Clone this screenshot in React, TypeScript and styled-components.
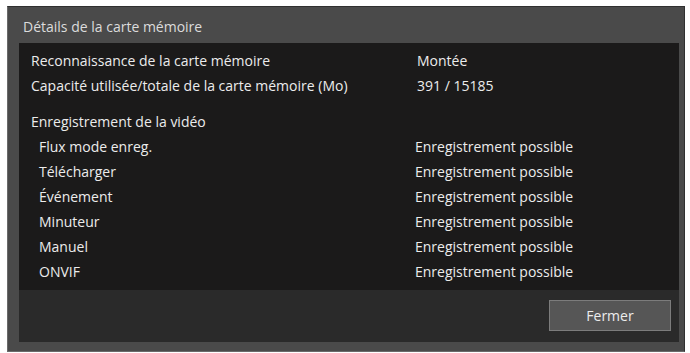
import React from "react";
import styled, { createGlobalStyle } from "styled-components";

const GlobalStyle = createGlobalStyle`
  html, body {
    margin: 0;
    padding: 0;
    background: #ffffff;
  }
  body {
    font-family: "Open Sans", "Noto Sans", sans-serif;
  }
`;

const Page = styled.div`
  width: 690px;
  height: 353px;
  padding: 6px 5px 1px 7px;
  box-sizing: border-box;
`;

const Dialog = styled.div`
  width: 678px;
  height: 346px;
  box-sizing: border-box;
  background: #4a4a4a;
  border: 1px solid #303030;
  border-left-color: #6a6a6a;
  border-bottom-color: #6a6a6a;
  display: flex;
  flex-direction: column;
  padding: 0 5px 9px 11px;
`;

const TitleBar = styled.div`
  height: 36px;
  display: flex;
  align-items: center;
  padding: 2px 0 0 4px;
  box-sizing: border-box;
  color: #dcdcdc;
  font-size: 14px;
`;

const Content = styled.div`
  height: 247px;
  background: #1b1a1a;
  padding: 5px 12px 0 12px;
  box-sizing: border-box;
  color: #ececec;
  font-size: 14px;
`;

const Row = styled.div<{ $indent?: boolean }>`
  display: grid;
  grid-template-columns: ${(p) => (p.$indent ? "376px" : "384px")} 1fr;
  padding-left: ${(p) => (p.$indent ? "8px" : "0")};
  height: 25px;
  align-items: center;
`;

const Section = styled.div`
  margin-top: 11px;
  height: 25px;
  display: flex;
  align-items: center;
`;

const Value = styled.span<{ $shift?: number }>`
  padding-left: ${(p) => p.$shift ?? 0}px;
`;

const Footer = styled.div`
  flex: 1;
  background: #2a2a2a;
  display: flex;
  justify-content: flex-end;
  align-items: flex-start;
  padding: 10px 8px 0 0;
`;

const Button = styled.button`
  width: 122px;
  height: 31px;
  background: #565656;
  border: 1px solid #7c7c7c;
  color: #ececec;
  font-family: "Open Sans", "Noto Sans", sans-serif;
  font-size: 14px;
  padding: 0;
`;

const recordRows = [
  "Flux mode enreg.",
  "Télécharger",
  "Événement",
  "Minuteur",
  "Manuel",
  "ONVIF",
];

export default function App() {
  return (
    <>
      <GlobalStyle />
      <Page>
        <Dialog>
          <TitleBar>Détails de la carte mémoire</TitleBar>
          <Content>
            <Row>
              <span>Reconnaissance de la carte mémoire</span>
              <Value $shift={2}>Montée</Value>
            </Row>
            <Row>
              <span>Capacité utilisée/totale de la carte mémoire (Mo)</span>
              <Value $shift={2}>391 / 15185</Value>
            </Row>
            <Section>Enregistrement de la vidéo</Section>
            {recordRows.map((label) => (
              <Row $indent key={label}>
                <span>{label}</span>
                <Value>Enregistrement possible</Value>
              </Row>
            ))}
          </Content>
          <Footer>
            <Button>Fermer</Button>
          </Footer>
        </Dialog>
      </Page>
    </>
  );
}
